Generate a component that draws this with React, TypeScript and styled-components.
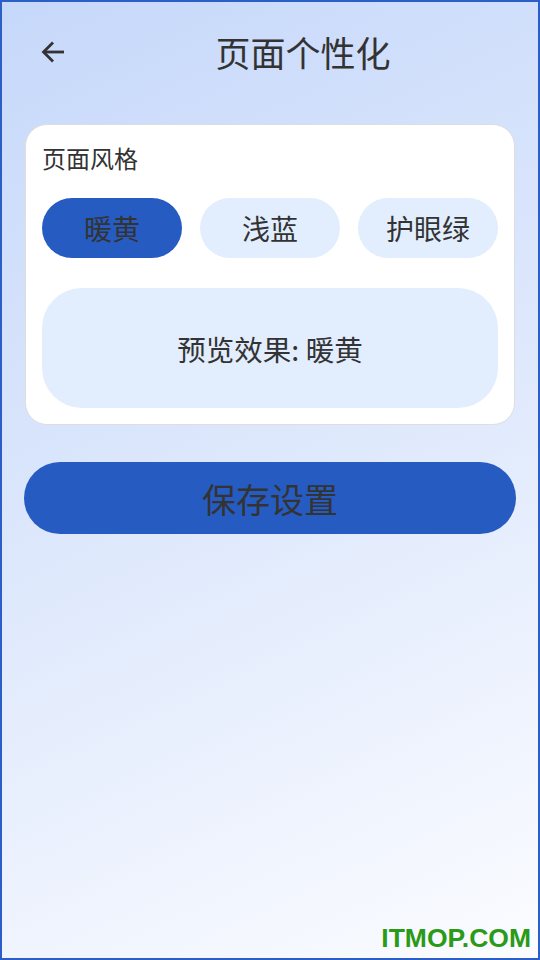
import React, { useState } from "react";
import styled, { createGlobalStyle } from "styled-components";

const GlobalStyle = createGlobalStyle`
  * { box-sizing: border-box; }
  html, body { margin: 0; padding: 0; }
  body {
    font-family: "Noto Sans CJK SC", "Noto Sans", sans-serif;
    color: #333333;
  }
`;

const Screen = styled.div`
  position: relative;
  width: 540px;
  height: 960px;
  border: 2px solid #2b5ec6;
  background: linear-gradient(155deg, #c6d8fa 0%, #dce7fc 45%, #fbfcff 100%);
  display: flex;
  flex-direction: column;
`;

const Header = styled.header`
  display: flex;
  align-items: center;
  height: 100px;
  padding-left: 34px;
`;

const BackButton = styled.button`
  width: 32px;
  height: 32px;
  padding: 0;
  border: none;
  background: none;
  display: flex;
  align-items: center;
  justify-content: center;
  color: #333333;
  cursor: pointer;
`;

const Title = styled.h1`
  flex: 1;
  margin: 0;
  text-align: center;
  font-size: 35px;
  font-weight: 400;
  line-height: 48px;
`;

const Card = styled.section`
  margin: 22px 23px 0;
  padding: 16px;
  background: #ffffff;
  border: 1px solid #dedede;
  border-radius: 22px;
`;

const CardTitle = styled.div`
  font-size: 24px;
  line-height: 34px;
`;

const ChipRow = styled.div`
  display: grid;
  grid-template-columns: repeat(3, 1fr);
  gap: 18px;
  margin-top: 23px;
`;

const Chip = styled.button<{ $active: boolean }>`
  height: 60px;
  border: none;
  border-radius: 30px;
  background: ${(p) => (p.$active ? "#265cc2" : "#e2eefe")};
  color: #333333;
  font-family: inherit;
  font-size: 28px;
  cursor: pointer;
`;

const Preview = styled.div`
  margin-top: 30px;
  height: 120px;
  border-radius: 40px;
  background: #e2eefe;
  display: flex;
  align-items: center;
  justify-content: center;
  font-size: 28.5px;
`;

const SaveButton = styled.button`
  margin: 37px 22px 0;
  height: 72px;
  border: none;
  border-radius: 36px;
  background: #265cc2;
  color: #333333;
  font-family: inherit;
  font-size: 34px;
  cursor: pointer;
`;

const Watermark = styled.div`
  position: absolute;
  right: 7px;
  bottom: 4px;
  font-family: "Liberation Sans", Arial, sans-serif;
  font-weight: 700;
  font-size: 26.5px;
  color: #2a9a18;
`;

const styles = ["暖黄", "浅蓝", "护眼绿"];

export default function App() {
  const [selected, setSelected] = useState("暖黄");

  return (
    <>
      <GlobalStyle />
      <Screen>
        <Header>
          <BackButton aria-label="返回">
            <svg
              width="32"
              height="32"
              viewBox="0 0 32 32"
              fill="none"
              stroke="currentColor"
              strokeWidth="2.8"
              strokeLinecap="butt"
              strokeLinejoin="miter"
            >
              <path d="M28 16H9" />
              <path d="M17 6.5 7.5 16l9.5 9.5" />
            </svg>
          </BackButton>
          <Title>页面个性化</Title>
        </Header>

        <Card>
          <CardTitle>页面风格</CardTitle>
          <ChipRow>
            {styles.map((s) => (
              <Chip key={s} $active={s === selected} onClick={() => setSelected(s)}>
                {s}
              </Chip>
            ))}
          </ChipRow>
          <Preview>预览效果: {selected}</Preview>
        </Card>

        <SaveButton>保存设置</SaveButton>

        <Watermark>ITMOP.COM</Watermark>
      </Screen>
    </>
  );
}
